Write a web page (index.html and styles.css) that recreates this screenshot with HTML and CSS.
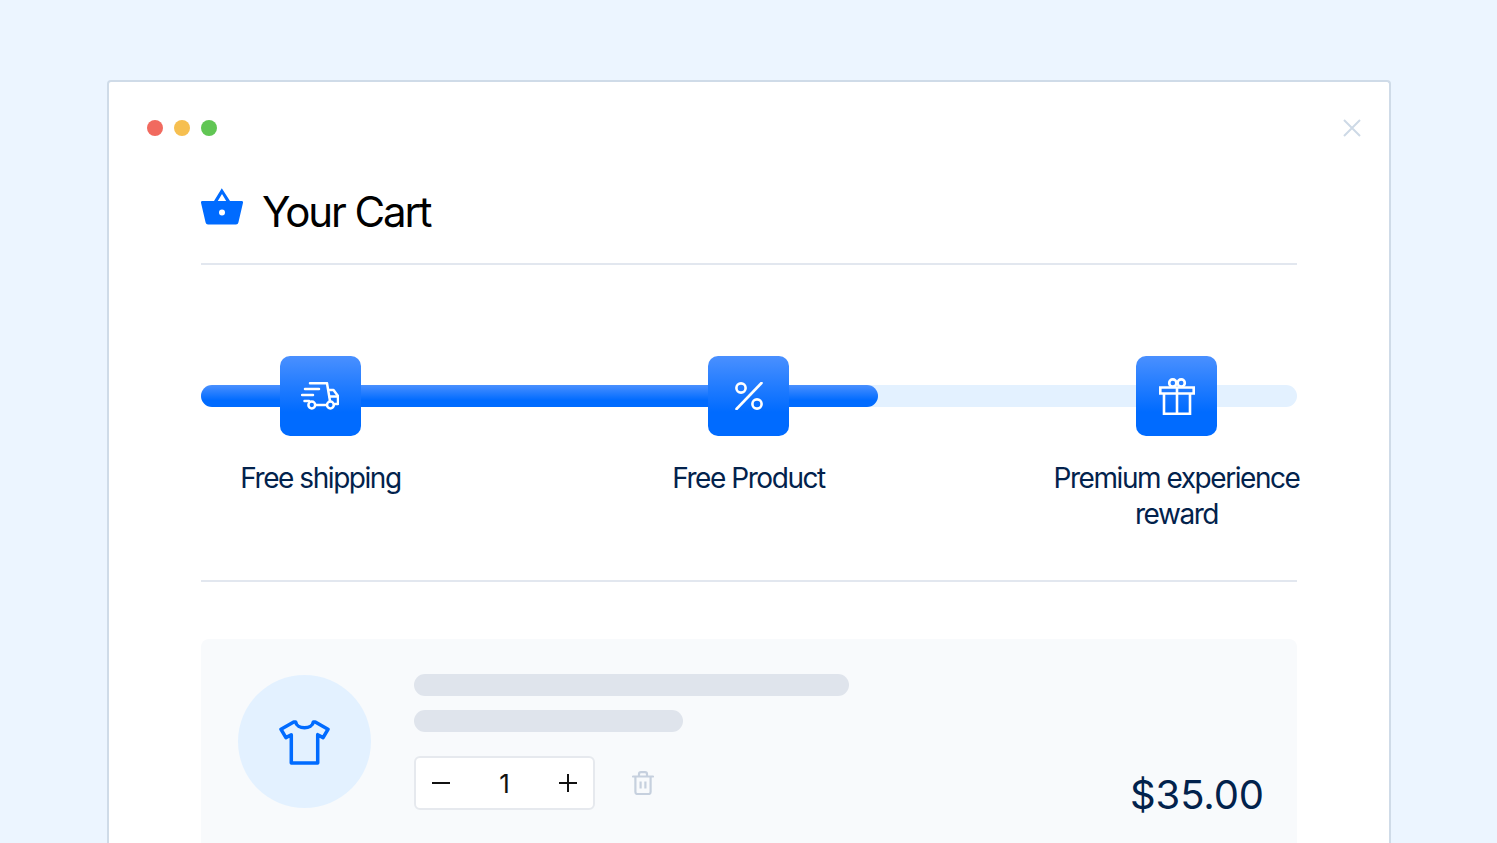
FILE: index.html
```html
<!DOCTYPE html>
<html lang="en">

<head>
  <meta charset="UTF-8">
  <title>Your Cart</title>
  <meta name="viewport" content="width=device-width, initial-scale=1.0">
  <link rel="stylesheet" href="styles.css">
</head>

<body>

  <div class="window">
    <div class="window-bar">
      <div class="dots">
        <span class="dot red"></span>
        <span class="dot yellow"></span>
        <span class="dot green"></span>
      </div>
      <svg class="close" width="20" height="20" viewBox="0 0 20 20">
        <path d="M2 2 L18 18 M18 2 L2 18" fill="none" stroke="#cdd9e6" stroke-width="2" />
      </svg>
    </div>

    <div class="content">
      <div class="cart-title">
        <svg width="42" height="37" viewBox="0 0 42 37">
          <path d="M20.8 .2 L29 13 H40.6 A1.3 1.3 0 0 1 42 14.8 L37.4 34.4 A2.6 2.6 0 0 1 35 36.4 H7 A2.6 2.6 0 0 1 4.6 34.4 L0 14.8 A1.3 1.3 0 0 1 1.4 13 H13 Z M21 6 L16.8 13 H25.2 Z" fill="#006bff" fill-rule="evenodd" />
          <circle cx="21" cy="24.4" r="3" fill="#fff" />
        </svg>
        <h1>Your Cart</h1>
      </div>

      <div class="rewards">
        <div class="track"><div class="track-fill"></div></div>

        <div class="step">
          <div class="step-icon">
            <svg class="truck" width="38" height="28" viewBox="0 0 38 28" fill="none" stroke="#fff" stroke-width="2.5" stroke-linecap="round" stroke-linejoin="round">
              <path d="M9 1.2 H26 L29 19" />
              <path d="M27.5 8 H32.5 L37 14 V22 H34" />
              <path d="M28.5 14.5 H37" />
              <path d="M24.5 23 H15.5" />
              <path d="M4 7 H18" />
              <path d="M1 13 H12" />
              <path d="M3.5 19 H8" />
              <circle cx="10.8" cy="23" r="3.4" />
              <circle cx="29.4" cy="23" r="3.4" />
            </svg>
          </div>
          <p class="step-label">Free shipping</p>
        </div>

        <div class="step">
          <div class="step-icon">
            <svg width="28" height="28" viewBox="0 0 28 28" fill="none" stroke="#fff" stroke-width="2.6" stroke-linecap="round">
              <path d="M26.5 1 L1.5 27" />
              <circle cx="6" cy="6" r="4.6" />
              <circle cx="22" cy="22" r="4.6" />
            </svg>
          </div>
          <p class="step-label">Free Product</p>
        </div>

        <div class="step">
          <div class="step-icon">
            <svg width="36" height="37" viewBox="0 0 36 37" fill="none" stroke="#fff" stroke-width="2.6">
              <path d="M1.3 9.5 H34.7 V15.5 H1.3 Z" />
              <path d="M5 15.5 V35.7 H31 V15.5" />
              <path d="M18 9.5 V35.7" />
              <circle cx="13.8" cy="5" r="3.6" />
              <circle cx="22.2" cy="5" r="3.6" />
            </svg>
          </div>
          <p class="step-label">Premium experience<br>reward</p>
        </div>
      </div>

      <div class="cart-item">
        <div class="item-thumb">
          <svg width="51" height="45" viewBox="0 0 52 46" fill="none" stroke="#006bff" stroke-width="3.6" stroke-linejoin="round">
            <path d="M17 2 C18 10 34 10 35 2 H37 L50 9.5 L45 18 L39.5 15 V44 H12.5 V15 L7 18 L2 9.5 L15 2 Z" />
          </svg>
        </div>

        <div class="item-info">
          <div class="bar bar-long"></div>
          <div class="bar bar-short"></div>
          <div class="item-actions">
            <div class="stepper">
              <svg width="18" height="18" viewBox="0 0 18 18"><path d="M0 9 H18" stroke="#111" stroke-width="2" /></svg>
              <span class="qty">1</span>
              <svg width="18" height="18" viewBox="0 0 18 18"><path d="M0 9 H18 M9 0 V18" stroke="#111" stroke-width="2" /></svg>
            </div>
            <svg class="trash" width="22" height="24" viewBox="0 0 22 24" fill="none" stroke="#c6d0de" stroke-width="2.2" stroke-linejoin="round">
              <path d="M1 5.5 H21" stroke-linecap="round" />
              <path d="M7 5 V3 Q7 1.2 9 1.2 H13 Q15 1.2 15 3 V5" />
              <path d="M3.4 5.5 V21 Q3.4 23 5.4 23 H16.6 Q18.6 23 18.6 21 V5.5" />
              <path d="M8.6 10.5 V17.5 M13.4 10.5 V17.5" />
            </svg>
          </div>
        </div>

        <div class="price">$35.00</div>
      </div>
    </div>
  </div>

</body>

</html>
```

FILE: styles.css
```css
body {
  margin: 0;
  background: #ecf5ff;
  height: 843px;
  overflow: hidden;
  font-family: Inter, "Liberation Sans", sans-serif;
}

.window {
  box-sizing: border-box;
  width: 1284px;
  height: 800px;
  margin: 80px 0 0 107px;
  padding: 0 92px 0 38px;
  background: #fff;
  border: 2px solid #cfdbe8;
  border-bottom: 0;
  border-radius: 4px 4px 0 0;
}

.window-bar {
  display: flex;
  justify-content: space-between;
  align-items: center;
  height: 92px;
  margin-right: -65px;
}

.dots {
  display: flex;
  gap: 11px;
}

.dot {
  width: 16px;
  height: 16px;
  border-radius: 50%;
}

.red {
  background: #f16a5f;
}

.yellow {
  background: #f6bf50;
}

.green {
  background: #61c654;
}

.content {
  width: 1096px;
  margin-left: 54px;
}

/* 标题 */
.cart-title {
  display: flex;
  align-items: center;
  gap: 19px;
  height: 89px;
  border-bottom: 2px solid #e2e7ef;
}

.cart-title svg {
  margin-top: -24px;
}

.cart-title h1 {
  margin: -15px 0 0;
  font-size: 42px;
  font-weight: 400;
  letter-spacing: -2.1px;
  color: #000;
}

/* 进度 */
.rewards {
  position: relative;
  display: flex;
  justify-content: space-between;
  height: 224px;
  padding: 91px 1px 0 0;
  margin-bottom: 57px;
  border-bottom: 2px solid #e2e7ef;
}

.track {
  position: absolute;
  top: 120px;
  left: 0;
  width: 100%;
  height: 22px;
  border-radius: 11px;
  background: #e3f1ff;
}

.track-fill {
  width: 677px;
  height: 100%;
  border-radius: 11px;
  background: linear-gradient(#4a90ff, #006bff 70%);
}

.step {
  position: relative;
  display: flex;
  flex-direction: column;
  align-items: center;
  width: 239px;
}

.step-icon {
  display: flex;
  justify-content: center;
  align-items: center;
  width: 81px;
  height: 80px;
  border-radius: 10px;
  background: linear-gradient(#4a90ff, #006bff 70%);
}

.truck {
  margin-left: -1px;
}

.step-label {
  flex: none;
  width: 280px;
  margin: 24px 0 0;
  font-size: 28px;
  line-height: 36px;
  letter-spacing: -1.45px;
  text-align: center;
  color: #02224c;
}

/* 商品 */
.cart-item {
  display: flex;
  height: 204px;
  padding: 35px 33px 0 36.5px;
  box-sizing: border-box;
  background: #f8fafc;
  border-radius: 8px 8px 0 0;
}

.item-thumb {
  display: flex;
  flex: none;
  justify-content: center;
  align-items: center;
  width: 133px;
  height: 133px;
  margin-top: 1px;
  border-radius: 50%;
  background: #e3f1ff;
}

.item-thumb svg {
  margin-top: 1px;
}

.item-info {
  display: flex;
  flex-direction: column;
  margin-left: 43.5px;
}

.bar {
  height: 22px;
  border-radius: 11px;
  background: #dfe4ec;
}

.bar-long {
  width: 435px;
  margin-bottom: 14px;
}

.bar-short {
  width: 269px;
  margin-bottom: 24px;
}

.item-actions {
  display: flex;
  align-items: center;
  gap: 37px;
}

.stepper {
  display: flex;
  justify-content: space-between;
  align-items: center;
  box-sizing: border-box;
  width: 181px;
  height: 54px;
  padding: 0 16px;
  background: #fff;
  border: 2px solid #e6e9ee;
  border-radius: 6px;
}

.qty {
  font-size: 26px;
  color: #111;
}

.price {
  margin: 93px 0 0 auto;
  font-size: 40px;
  font-weight: 400;
  line-height: 56px;
  letter-spacing: -0.1px;
  color: #02224c;
}
```
